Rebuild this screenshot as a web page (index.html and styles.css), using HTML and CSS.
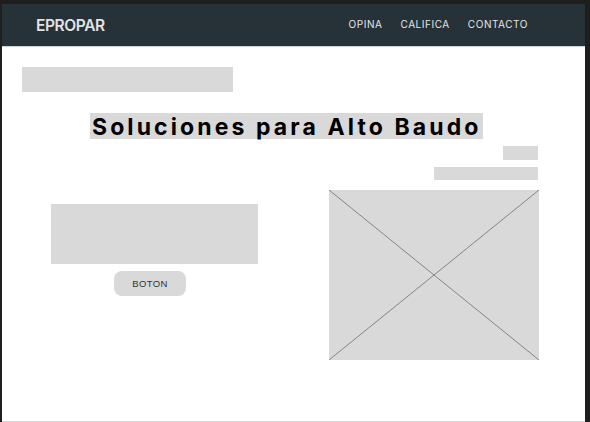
FILE: index.html
```html
<!DOCTYPE html>
<html lang="es">
<head>
<meta charset="utf-8">
<title>EPROPAR</title>
<link rel="stylesheet" href="styles.css">
</head>
<body>
<div class="frame">
  <div class="page">
    <header class="nav">
      <div class="brand">EPROPAR</div>
      <nav class="links">
        <a href="#">OPINA</a>
        <a href="#">CALIFICA</a>
        <a href="#">CONTACTO</a>
      </nav>
    </header>
    <main class="main">
      <div class="bar1"></div>
      <h1 class="heading">Soluciones para Alto Baudo</h1>
      <div class="meta">
        <div class="meta-a"></div>
        <div class="meta-b"></div>
      </div>
      <section class="split">
        <div class="left">
          <div class="textblock"></div>
          <button class="btn">BOTON</button>
        </div>
        <div class="right">
          <svg class="placeholder" viewBox="0 0 210 170" preserveAspectRatio="none" width="210" height="170">
            <rect x="0" y="0" width="210" height="170" fill="#d9d9d9"/>
            <line x1="0" y1="0" x2="210" y2="170" stroke="#6e6e6e" stroke-width="0.8"/>
            <line x1="210" y1="0" x2="0" y2="170" stroke="#6e6e6e" stroke-width="0.8"/>
          </svg>
        </div>
      </section>
    </main>
  </div>
</div>
</body>
</html>
```
FILE: styles.css
```css
html, body {
  margin: 0;
  padding: 0;
  background: #1e1e1e;
}
.frame {
  width: 590px;
  height: 422px;
  padding: 4px 5px 0 2px;
  box-sizing: border-box;
  overflow: hidden;
}
.page {
  width: 583px;
  height: 418px;
  background: #ffffff;
  border-bottom: 1px solid #d6d6d6;
  box-sizing: border-box;
  display: flex;
  flex-direction: column;
}
.nav {
  height: 43px;
  background: #263238;
  border-bottom: 1px solid #cfd4d6;
  box-sizing: border-box;
  display: flex;
  align-items: center;
  justify-content: space-between;
  padding: 0 57px 0 34px;
}
.brand {
  font-family: Inter, "Open Sans", sans-serif;
  font-weight: 600;
  font-size: 15.5px;
  color: #e3e3e3;
  letter-spacing: -0.4px;
  margin-top: 1px;
}
.links {
  display: flex;
  gap: 18px;
  margin-top: -2px;
}
.links a {
  font-family: Inter, "Open Sans", sans-serif;
  font-size: 10px;
  font-weight: 400;
  letter-spacing: 0.55px;
  color: #e6e6e6;
  text-decoration: none;
}
.main {
  padding: 20px 47px 0 20px;
  display: flex;
  flex-direction: column;
  align-items: flex-start;
}
.bar1 {
  width: 211px;
  height: 25px;
  background: #d9d9d9;
}
.heading {
  margin: 21px 0 0 68px;
  height: 26px;
  width: 393px;
  background: #d9d9d9;
  font-family: Inter, "Open Sans", sans-serif;
  font-weight: 700;
  font-size: 23px;
  line-height: 28px;
  letter-spacing: 3.1px;
  color: #000;
  padding-left: 2px;
  box-sizing: border-box;
  white-space: nowrap;
  overflow: visible;
}
.meta {
  align-self: stretch;
  display: flex;
  flex-direction: column;
  align-items: flex-end;
  gap: 7px;
  margin-top: 7px;
}
.meta-a {
  width: 35px;
  height: 14px;
  background: #d9d9d9;
}
.meta-b {
  width: 104px;
  height: 13px;
  background: #d9d9d9;
}
.split {
  align-self: stretch;
  margin: 10px -1px 0 0;
  display: grid;
  grid-template-columns: 1fr 210px;
}
.left {
  padding: 14px 0 0 29px;
  display: flex;
  flex-direction: column;
  align-items: flex-start;
}
.textblock {
  width: 207px;
  height: 60px;
  background: #d9d9d9;
}
.btn {
  margin: 7px 0 0 63px;
  width: 72px;
  height: 25px;
  border: none;
  border-radius: 8px;
  background: #d9d9d9;
  font-family: "Liberation Sans", Arial, sans-serif;
  font-size: 9.5px;
  letter-spacing: 0.4px;
  color: #333;
  padding: 0;
}
.right {
  display: flex;
  justify-content: flex-end;
}
.placeholder {
  display: block;
  width: 210px;
  height: 170px;
}
```
